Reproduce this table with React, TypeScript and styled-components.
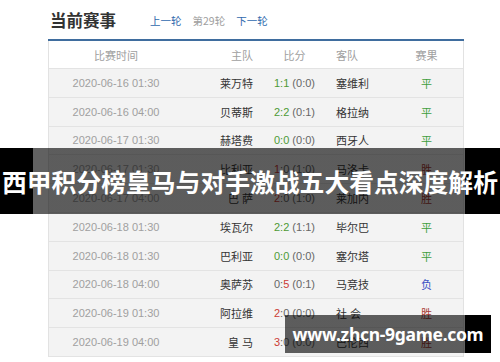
import styled, {createGlobalStyle} from "styled-components";

const GlobalStyle = createGlobalStyle`
  body {
    margin: 0;
    background: #fff;
    font-family: "Liberation Sans", "Noto Sans CJK SC", sans-serif;
  }
`;

const Page = styled.div`
  position: relative;
  width: 500px;
  height: 362px;
  overflow: hidden;
  padding-left: 48px;
  box-sizing: border-box;
`;

const TitleBar = styled.div`
  display: flex;
  align-items: center;
  height: 39px;
  width: 416px;
  border-bottom: 2px solid #3f6d9e;
`;

const Title = styled.h2`
  margin: 0 0 0 2px;
  font-size: 16.5px;
  font-weight: bold;
  color: #333;
  font-family: "Noto Sans CJK SC", sans-serif;
`;

const Nav = styled.div`
  display: flex;
  gap: 11px;
  margin-left: 34px;
  margin-top: 2px;
  font-size: 10.5px;
  font-family: "Noto Sans CJK SC", sans-serif;
`;

const NavLink = styled.span<{$muted?: boolean}>`
  color: ${({$muted}) => ($muted ? "#a0a0a0" : "#2f69ad")};
`;

const Table = styled.div`
  width: 416px;
  border-left: 1px solid #e2e2e2;
  border-right: 1px solid #e2e2e2;
  box-sizing: border-box;
`;

const Row = styled.div<{$head?: boolean}>`
  display: grid;
  grid-template-columns: 134px 70px 83px 54px 73px;
  align-items: center;
  height: ${({$head}) => ($head ? "28px" : "28.8px")};
  box-sizing: border-box;
  border-bottom: 1px solid #e3e3e3;
  background: ${({$head}) => ($head ? "#fff" : "#f3f3f3")};
  font-size: 11px;
  color: ${({$head}) => ($head ? "#a0a0a0" : "#333")};
`;

const Cell = styled.div<{$align?: "left" | "right" | "center"}>`
  text-align: ${({$align}) => $align || "center"};
  white-space: pre;
`;

const Time = styled(Cell)`
  color: #a0a0a0;
`;

const Score = styled(Cell)`
  color: #666;
`;

const Hit = styled.span<{$tone: "draw" | "win"}>`
  color: ${({$tone}) => ($tone === "draw" ? "#4e9a36" : "#cc3b33")};
`;

const Result = styled(Cell)<{$r: string}>`
  font-family: "Noto Sans CJK SC", sans-serif;
  color: ${({$r}) => ($r === "平" ? "#3f9e3f" : $r === "胜" ? "#a83a32" : "#3b50c4")};
`;

const Banner = styled.div`
  position: absolute;
  top: 148px;
  left: 0;
  width: 500px;
  height: 66px;
  display: flex;
  align-items: center;
  justify-content: center;
  background: linear-gradient(
    to right,
    #000 33px,
    rgba(0, 0, 0, 0.62) 33px,
    rgba(0, 0, 0, 0.62) 465px,
    #000 465px
  );
  color: #fff;
  font-family: "Noto Sans CJK SC", sans-serif;
  font-weight: bold;
  font-size: 24.8px;
  white-space: nowrap;
`;

const Watermark = styled.div`
  position: absolute;
  top: 315px;
  left: 285px;
  width: 206px;
  height: 38px;
  display: flex;
  align-items: center;
  justify-content: center;
  background: linear-gradient(
    to right,
    rgba(0, 0, 0, 0.62) 180px,
    #000 180px
  );
  color: #fff;
  font-family: "Noto Sans", sans-serif;
  font-weight: bold;
  font-size: 17.5px;
  letter-spacing: -0.3px;
`;

type Match = {
  time: string;
  home: string;
  score: [string, string];
  half: string;
  away: string;
  result: string;
};

const matches: Match[] = [
  {time: "2020-06-16 01:30", home: "莱万特", score: ["1", "1"], half: "0:0", away: "塞维利", result: "平"},
  {time: "2020-06-16 04:00", home: "贝蒂斯", score: ["2", "2"], half: "0:1", away: "格拉纳", result: "平"},
  {time: "2020-06-17 01:30", home: "赫塔费", score: ["0", "0"], half: "0:0", away: "西牙人", result: "平"},
  {time: "2020-06-17 01:30", home: "比利亚", score: ["1", "0"], half: "1:0", away: "马洛卡", result: "胜"},
  {time: "2020-06-17 04:00", home: "巴 萨", score: ["2", "0"], half: "1:0", away: "莱加内", result: "胜"},
  {time: "2020-06-18 01:30", home: "埃瓦尔", score: ["2", "2"], half: "1:1", away: "毕尔巴", result: "平"},
  {time: "2020-06-18 01:30", home: "巴利亚", score: ["0", "0"], half: "0:0", away: "塞尔塔", result: "平"},
  {time: "2020-06-18 04:00", home: "奥萨苏", score: ["0", "5"], half: "0:1", away: "马竞技", result: "负"},
  {time: "2020-06-19 01:30", home: "阿拉维", score: ["2", "0"], half: "0:0", away: "社 会", result: "胜"},
  {time: "2020-06-19 04:00", home: "皇 马", score: ["3", "0"], half: "0:0", away: "巴伦西", result: "胜"},
];

const ScoreText = ({m}: {m: Match}) => {
  const [h, a] = m.score;
  if (h === a) {
    return (
      <>
        <Hit $tone="draw">{h}:{a}</Hit> ({m.half})
      </>
    );
  }
  if (Number(h) > Number(a)) {
    return (
      <>
        <Hit $tone="win">{h}</Hit>:{a} ({m.half})
      </>
    );
  }
  return (
    <>
      {h}:<Hit $tone="win">{a}</Hit> ({m.half})
    </>
  );
};

const App = () => {
  return (
    <>
      <GlobalStyle />
      <Page>
        <TitleBar>
          <Title>当前赛事</Title>
          <Nav>
            <NavLink>上一轮</NavLink>
            <NavLink $muted>第29轮</NavLink>
            <NavLink>下一轮</NavLink>
          </Nav>
        </TitleBar>
        <Table>
          <Row $head>
            <Cell>比赛时间</Cell>
            <Cell $align="right">主队</Cell>
            <Cell>比分</Cell>
            <Cell $align="left">客队</Cell>
            <Cell>赛果</Cell>
          </Row>
          {matches.map((m, i) => (
            <Row key={i}>
              <Time>{m.time}</Time>
              <Cell $align="right">{m.home}</Cell>
              <Score>
                <ScoreText m={m} />
              </Score>
              <Cell $align="left">{m.away}</Cell>
              <Result $r={m.result}>{m.result}</Result>
            </Row>
          ))}
        </Table>
        <Banner>西甲积分榜皇马与对手激战五大看点深度解析</Banner>
        <Watermark>www.zhcn-9game.com</Watermark>
      </Page>
    </>
  );
};

export default App;
